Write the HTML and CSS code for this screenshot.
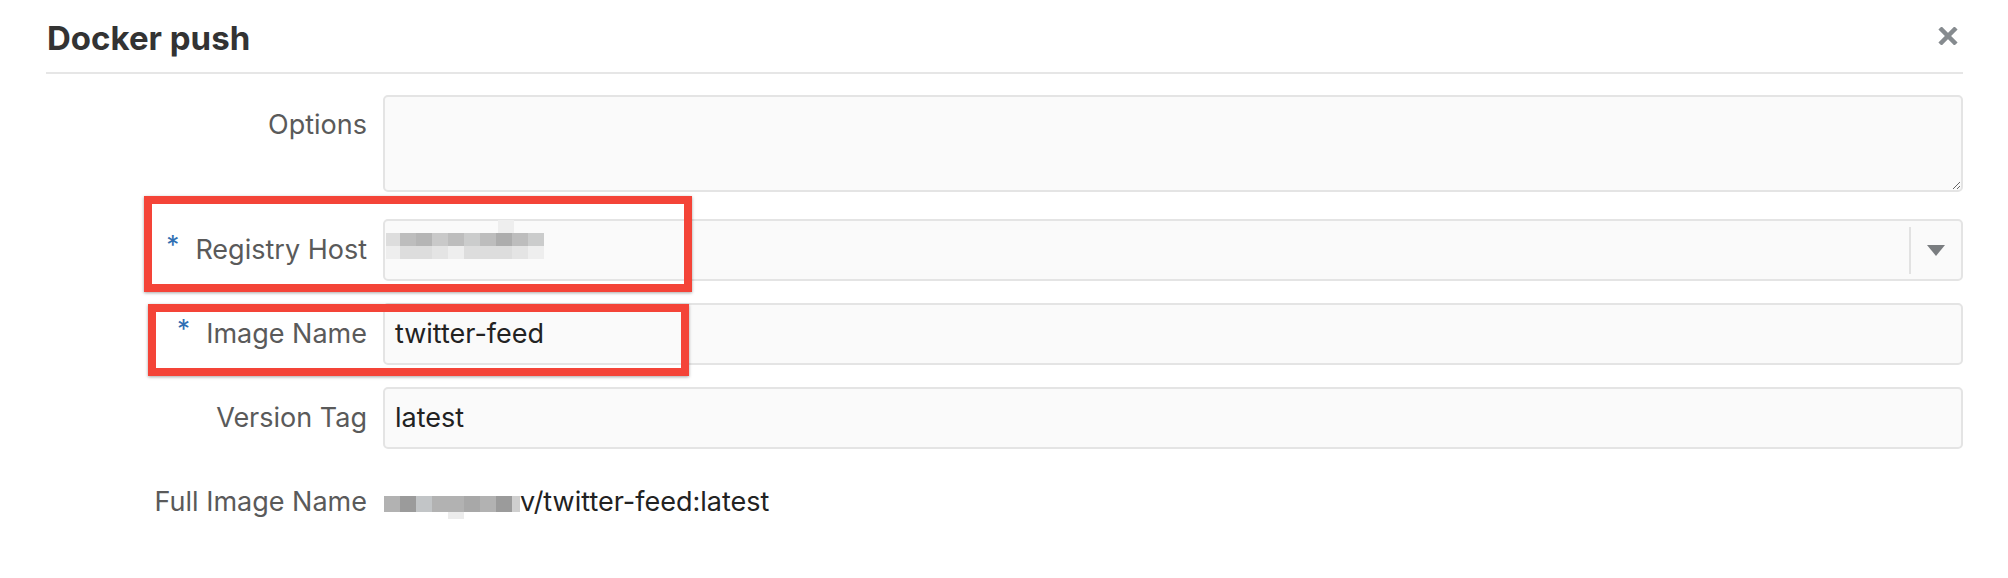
FILE: index.html
```html
<!DOCTYPE html>
<html lang="en">
<head>
<meta charset="utf-8">
<title>Docker push</title>
<link rel="stylesheet" href="styles.css">
</head>
<body>
<div class="dialog">
  <div class="header">
    <h1 class="title">Docker push</h1>
    <svg class="close" width="20" height="18" viewBox="0 0 20 18" aria-label="Close">
      <path d="M2 1 L18 17 M18 1 L2 17" stroke="#868b8f" stroke-width="4.5" fill="none"/>
    </svg>
  </div>

  <div class="form">
    <div class="row row-options">
      <label class="label">Options</label>
      <textarea class="textarea"></textarea>
    </div>

    <div class="row">
      <label class="label"><span class="req">*</span>Registry Host</label>
      <div class="field select">
        <div class="select-value">
          <div class="mosaic host">
            <div class="mrow top">
              <span class="cell w3 blank"></span><span class="cell w3 blank"></span><span class="cell w3 blank"></span><span class="cell w3 blank"></span><span class="cell w3 blank"></span><span class="cell w3 blank"></span><span class="cell w3 blank"></span><span class="cell w3 s9"></span>
            </div>
            <div class="mrow">
              <span class="cell w2 s7"></span><span class="cell s3"></span><span class="cell s2"></span><span class="cell s4"></span><span class="cell s3"></span><span class="cell s5"></span><span class="cell s3"></span><span class="cell s1"></span><span class="cell s3"></span><span class="cell s5"></span>
            </div>
            <div class="mrow">
              <span class="cell w2 s9"></span><span class="cell s7"></span><span class="cell s7"></span><span class="cell s8"></span><span class="cell s9"></span><span class="cell s7"></span><span class="cell s7"></span><span class="cell s7"></span><span class="cell s8"></span><span class="cell s9"></span>
            </div>
          </div>
        </div>
        <span class="divider"></span>
        <span class="arrow-box"><span class="arrow"></span></span>
      </div>
      <div class="annot annot-host"></div>
    </div>

    <div class="row">
      <label class="label"><span class="req">*</span>Image Name</label>
      <div class="field">twitter-feed</div>
      <div class="annot annot-image"></div>
    </div>

    <div class="row">
      <label class="label">Version Tag</label>
      <div class="field">latest</div>
    </div>

    <div class="row">
      <label class="label">Full Image Name</label>
      <div class="value"><span class="mosaic inline"><span class="icell d3"></span><span class="icell d1"></span><span class="icell d5"></span><span class="icell d3"></span><span class="icell d3 tail"></span><span class="icell d2"></span><span class="icell d3"></span><span class="icell d1"></span><span class="icell half d6"></span></span>v/twitter-feed:latest</div>
    </div>
  </div>
</div>
</body>
</html>
```

FILE: styles.css
```css
html, body {
  margin: 0;
  padding: 0;
  background: #ffffff;
}

body {
  font-family: "Inter", "Noto Sans", "Liberation Sans", sans-serif;
  color: #222222;
}

.dialog {
  padding: 0 45px 0 46px;
}

.header {
  display: flex;
  justify-content: space-between;
  align-items: flex-start;
  padding: 18px 0 14px;
  border-bottom: 2px solid #e6e6e6;
}

.title {
  margin: 0 0 0 1px;
  font-size: 33px;
  line-height: 40px;
  font-weight: 700;
  color: #333333;
  letter-spacing: 0;
}

.close {
  display: block;
  margin: 9px 5px 0 0;
}

.form {
  display: flex;
  flex-direction: column;
  gap: 22px;
  margin-top: 21px;
}

.row {
  position: relative;
  display: grid;
  grid-template-columns: 321px 1fr;
  column-gap: 16px;
}

.row-options {
  margin-bottom: 5px;
}

.label {
  text-align: right;
  font-size: 27px;
  line-height: 34px;
  color: #5a5a5a;
  padding-top: 14px;
}

.row-options .label {
  padding-top: 13px;
}

.req {
  color: #2f6fb3;
  font-size: 26px;
  position: relative;
  top: -5px;
  margin-right: 16px;
}

.textarea {
  display: block;
  box-sizing: border-box;
  width: 100%;
  height: 97px;
  margin: 0;
  border: 2px solid #e4e4e4;
  border-radius: 5px;
  background: #fafafa;
  font-family: inherit;
  font-size: 27px;
}

.field {
  box-sizing: border-box;
  height: 62px;
  display: flex;
  align-items: center;
  padding: 0 10px;
  border: 2px solid #e4e4e4;
  border-radius: 5px;
  background: #fafafa;
  font-size: 27px;
  line-height: 34px;
  color: #222222;
}

.select {
  padding-right: 0;
}

.select-value {
  flex: 1;
  align-self: stretch;
  display: flex;
  align-items: center;
}

.divider {
  width: 2px;
  height: 47px;
  background: #e2e2e2;
}

.arrow-box {
  width: 50px;
  display: flex;
  justify-content: center;
  align-items: center;
}

.arrow {
  width: 0;
  height: 0;
  border-left: 9px solid transparent;
  border-right: 9px solid transparent;
  border-top: 11px solid #7a7d80;
}

/* pixelated (redacted) text */
.mosaic.host {
  margin-left: -9px;
  margin-top: -8px;
  display: flex;
  flex-direction: column;
}

.mrow {
  display: flex;
  height: 13px;
}

.mrow.top {
  height: 0;
  position: relative;
}

.mrow.top .cell {
  height: 13px;
  margin-top: -13px;
}

.cell {
  display: block;
  width: 16px;
  height: 100%;
}

.cell.w2 {
  width: 14px;
}

.cell.w3 {
  width: 16px;
}

.blank { background: transparent; }
.s1 { background: #adadad; }
.s2 { background: #b5b5b5; }
.s3 { background: #bdbdbd; }
.s4 { background: #c9c9c9; }
.s5 { background: #cbcccc; }
.s7 { background: #dddddd; }
.s8 { background: #e4e4e4; }
.s9 { background: #eeeeee; }

.value {
  font-size: 27px;
  line-height: 34px;
  padding-top: 14px;
  color: #222222;
}

.mosaic.inline {
  display: inline-flex;
  align-items: flex-end;
  margin-left: 1px;
  vertical-align: baseline;
  position: relative;
  top: 1px;
}

.icell {
  display: block;
  width: 16px;
  height: 16px;
  position: relative;
}

.icell.half {
  width: 8px;
}

.icell.tail::after {
  content: "";
  position: absolute;
  left: 0;
  top: 16px;
  width: 16px;
  height: 7px;
  background: #ececec;
}

.d1 { background: #9b9b9b; }
.d2 { background: #a8a8a8; }
.d3 { background: #b2b2b2; }
.d5 { background: #c2c5c7; }
.d6 { background: #cfcfcf; }

/* annotation overlays */
.annot {
  position: absolute;
  box-sizing: border-box;
  border: 8px solid #f44438;
  box-shadow: 0 1px 3px rgba(0, 0, 0, 0.35);
  pointer-events: none;
}

.annot-host {
  left: 98px;
  top: -23px;
  width: 548px;
  height: 96px;
}

.annot-image {
  left: 102px;
  top: 1px;
  width: 541px;
  height: 72px;
}
```
